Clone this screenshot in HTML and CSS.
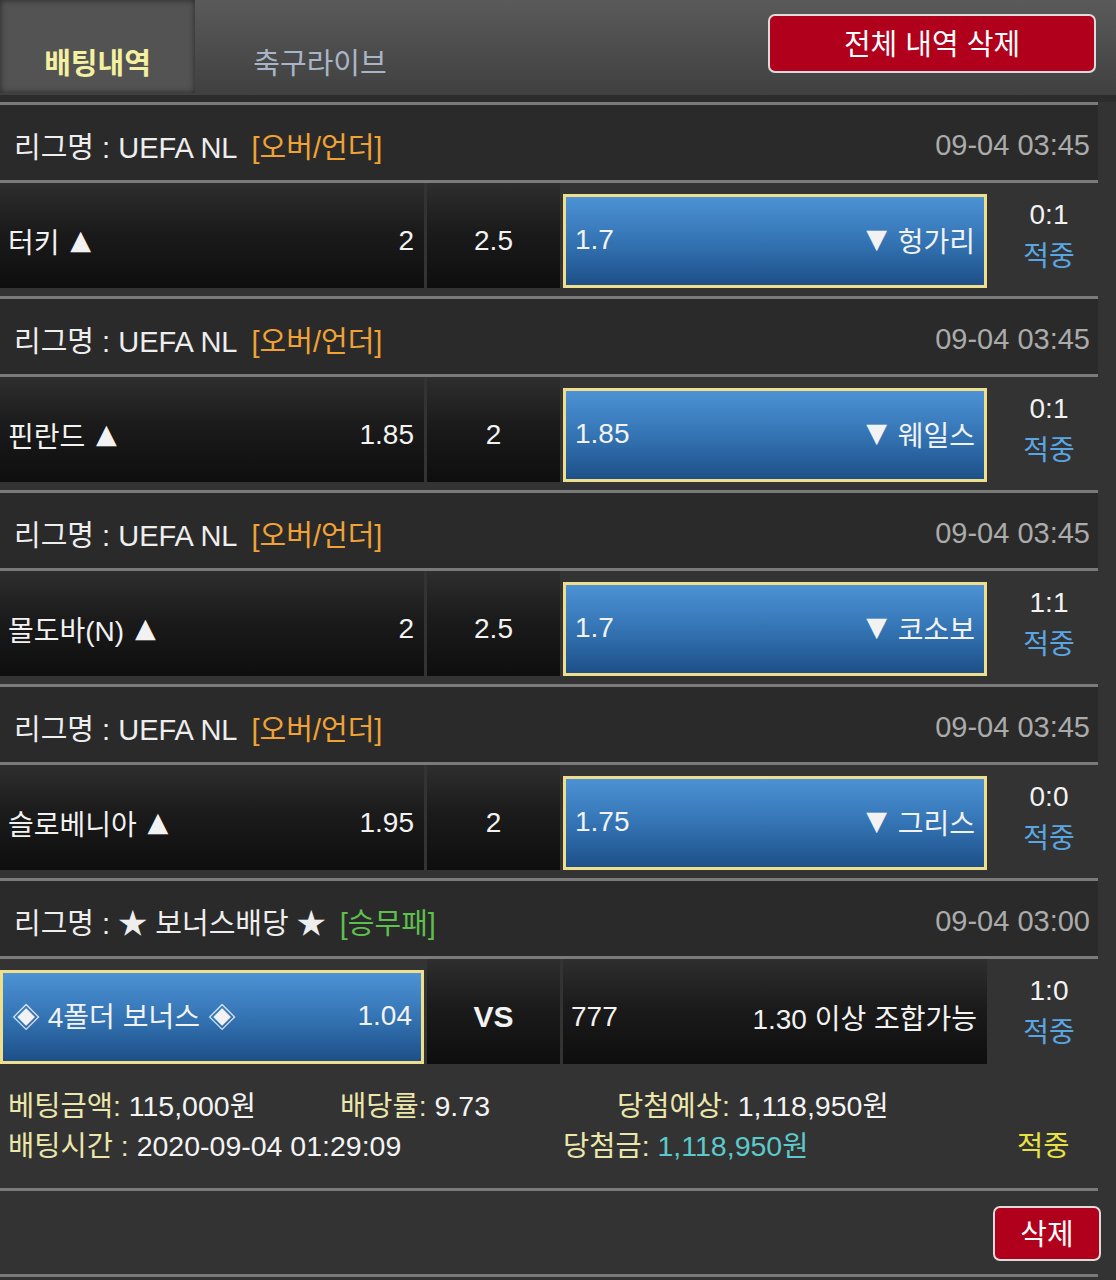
FILE: index.html
```html
<!DOCTYPE html>
<html lang="ko">
  <head>
    <meta charset="UTF-8" />
    <meta name="viewport" content="width=device-width, initial-scale=1.0" />
    <title>배팅내역</title>
    <link rel="stylesheet" href="styles.css">
  </head>
  <body>
    <div class="top">
      <div class="tabs">
        <div class="tab active">배팅내역</div>
        <div class="tab">축구라이브</div>
      </div>
      <button class="btn_red btn_all">전체 내역 삭제</button>
    </div>
    <div class="top_gap"></div>

    <div class="list">
      <!-- game 1 -->
      <div class="game">
        <div class="league">
          <span class="lname">리그명 : UEFA NL</span>
          <span class="type ou">[오버/언더]</span>
          <span class="date">09-04 03:45</span>
        </div>
        <div class="match">
          <div class="cell side"><span>터키 <span class="arr up">▲</span></span><span>2</span></div>
          <div class="cell mid">2.5</div>
          <div class="cell side picked"><span>1.7</span><span><span class="arr down">▼</span> 헝가리</span></div>
          <div class="result"><div>0:1</div><div class="hit">적중</div></div>
        </div>
      </div>

      <!-- game 2 -->
      <div class="game">
        <div class="league">
          <span class="lname">리그명 : UEFA NL</span>
          <span class="type ou">[오버/언더]</span>
          <span class="date">09-04 03:45</span>
        </div>
        <div class="match">
          <div class="cell side"><span>핀란드 <span class="arr up">▲</span></span><span>1.85</span></div>
          <div class="cell mid">2</div>
          <div class="cell side picked"><span>1.85</span><span><span class="arr down">▼</span> 웨일스</span></div>
          <div class="result"><div>0:1</div><div class="hit">적중</div></div>
        </div>
      </div>

      <!-- game 3 -->
      <div class="game">
        <div class="league">
          <span class="lname">리그명 : UEFA NL</span>
          <span class="type ou">[오버/언더]</span>
          <span class="date">09-04 03:45</span>
        </div>
        <div class="match">
          <div class="cell side"><span>몰도바(N) <span class="arr up">▲</span></span><span>2</span></div>
          <div class="cell mid">2.5</div>
          <div class="cell side picked"><span>1.7</span><span><span class="arr down">▼</span> 코소보</span></div>
          <div class="result"><div>1:1</div><div class="hit">적중</div></div>
        </div>
      </div>

      <!-- game 4 -->
      <div class="game">
        <div class="league">
          <span class="lname">리그명 : UEFA NL</span>
          <span class="type ou">[오버/언더]</span>
          <span class="date">09-04 03:45</span>
        </div>
        <div class="match">
          <div class="cell side"><span>슬로베니아 <span class="arr up">▲</span></span><span>1.95</span></div>
          <div class="cell mid">2</div>
          <div class="cell side picked"><span>1.75</span><span><span class="arr down">▼</span> 그리스</span></div>
          <div class="result"><div>0:0</div><div class="hit">적중</div></div>
        </div>
      </div>

      <!-- game 5 : bonus -->
      <div class="game">
        <div class="league">
          <span class="lname">리그명 : ★ 보너스배당 ★</span>
          <span class="type wdl">[승무패]</span>
          <span class="date">09-04 03:00</span>
        </div>
        <div class="match">
          <div class="cell side picked"><span>◈ 4폴더 보너스 ◈</span><span>1.04</span></div>
          <div class="cell mid vs">VS</div>
          <div class="cell side"><span>777</span><span>1.30 이상 조합가능</span></div>
          <div class="result"><div>1:0</div><div class="hit">적중</div></div>
        </div>
      </div>

      <div class="summary">
        <div class="sum_row">
          <span class="w1"><span class="lbl">베팅금액:</span> 115,000원</span>
          <span class="w2"><span class="lbl">배당률:</span> 9.73</span>
          <span><span class="lbl">당첨예상:</span> 1,118,950원</span>
        </div>
        <div class="sum_row">
          <span class="w3"><span class="lbl">배팅시간 :</span> 2020-09-04 01:29:09</span>
          <span class="w4"><span class="lbl">당첨금:</span> <span class="win">1,118,950원</span></span>
          <span class="status">적중</span>
        </div>
      </div>

      <div class="bottom">
        <button class="btn_red btn_del">삭제</button>
      </div>
    </div>
  </body>
</html>
```

FILE: styles.css
```css
body {
  margin: 0;
  background-color: #333333;
  font-family: "Liberation Sans", "Noto Sans CJK KR", sans-serif;
  color: #eeeeee;
  width: 1116px;
}

/* header */
.top {
  height: 95px;
  display: flex;
  justify-content: space-between;
  background-image: linear-gradient(180deg, #5a5a5a 0%, #404040 100%);
}

.tabs {
  display: flex;
}

.tab {
  height: 93px;
  box-sizing: border-box;
  padding-top: 40px;
  font-size: 29px;
  text-align: center;
  color: #a9b5c7;
}

.tab:first-child {
  width: 195px;
}

.tab:last-child {
  width: 250px;
}

.tab.active {
  color: #f4f0a2;
  font-weight: bold;
  background-color: #535353;
  box-shadow: inset 0 0 6px #262626;
}

.btn_red {
  background-color: #b1001c;
  color: #ffffff;
  border: 2px solid #dcdcdc;
  border-radius: 7px;
  font-family: "Liberation Sans", "Noto Sans CJK KR", sans-serif;
  cursor: pointer;
}

.btn_all {
  width: 328px;
  height: 59px;
  margin: 14px 20px 0 0;
  font-size: 29px;
  padding: 0;
  padding-bottom: 3px;
}

.top_gap {
  height: 7px;
  background-color: #2c2c2c;
}

/* list */
.list {
  width: 1098px;
}

.game {
  border-top: 3px solid #7a7a7a;
}

.league {
  height: 78px;
  box-sizing: border-box;
  display: flex;
  align-items: center;
  padding: 5px 8px 0 14px;
  font-size: 29px;
  background-color: #2a2a2a;
  border-bottom: 3px solid #7a7a7a;
}

.type {
  margin-left: 14px;
}

.ou {
  color: #f0a235;
}

.wdl {
  color: #5dbf4e;
}

.date {
  margin-left: auto;
  color: #ababab;
}

.match {
  height: 113px;
  display: flex;
  gap: 3px;
  background-color: #333333;
}

.cell {
  height: 105px;
  box-sizing: border-box;
  display: flex;
  align-items: center;
  padding-top: 10px;
  font-size: 28px;
  color: #f2f2f2;
  background-image: linear-gradient(180deg, #2e2e2e 0%, #1b1b1b 45%, #0e0e0e 100%);
}

.arr {
  font-family: "DejaVu Sans", sans-serif;
  font-size: 27px;
  vertical-align: 4px;
}

.up {
  margin-left: 3px;
}

.down {
  margin-right: 3px;
}

.side {
  width: 424px;
  justify-content: space-between;
  padding-left: 8px;
  padding-right: 10px;
}

.mid {
  width: 133px;
  justify-content: center;
}

.vs {
  font-weight: bold;
  font-size: 30px;
}

.picked {
  height: 94px;
  margin-top: 11px;
  padding: 0 9px 2px 9px;
  border: 3px solid #efdf8c;
  background-image: linear-gradient(180deg, #4c92d4 0%, #3474b4 50%, #1d5088 100%);
}

.result {
  flex: 1;
  height: 105px;
  display: flex;
  flex-direction: column;
  justify-content: center;
  align-items: center;
  padding-left: 10px;
  font-size: 28px;
  line-height: 42px;
  color: #f2f2f2;
}

.hit {
  color: #5aa6e2;
}

/* summary */
.summary {
  height: 119px;
  box-sizing: border-box;
  padding: 14px 0 0 8px;
  font-size: 28.5px;
  line-height: 40px;
  color: #f4f4f4;
  border-bottom: 3px solid #7a7a7a;
}

.sum_row {
  display: flex;
}

.lbl {
  color: #ebe6aa;
}

.win {
  color: #5ccacb;
}

.status {
  color: #e8e244;
}

.w1 {
  width: 332px;
}

.w2 {
  width: 277px;
}

.w3 {
  width: 555px;
}

.w4 {
  width: 454px;
}

.bottom {
  height: 83px;
  display: flex;
  justify-content: flex-end;
  align-items: flex-start;
  border-bottom: 3px solid #7a7a7a;
}

.btn_del {
  width: 108px;
  height: 55px;
  margin-top: 15px;
  margin-right: -3px;
  font-size: 29px;
  padding: 0 0 3px 0;
}
```
